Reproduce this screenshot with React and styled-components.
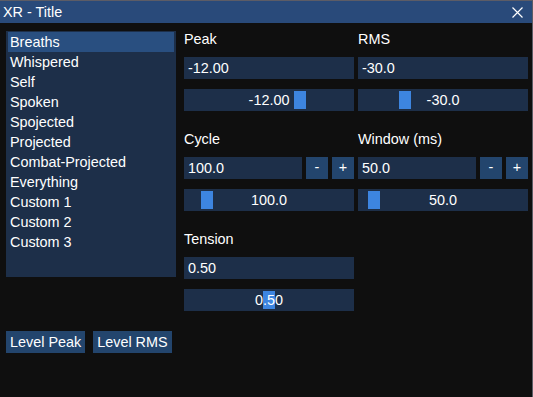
import React from "react";
import styled, { createGlobalStyle } from "styled-components";

const GlobalStyle = createGlobalStyle`
  html, body {
    margin: 0;
    padding: 0;
    background: #0f0f0f;
  }
  body {
    font-family: "Liberation Sans", Arial, sans-serif;
    font-size: 14.4px;
    color: #ffffff;
  }
`;

const Window = styled.div`
  width: 533px;
  height: 397px;
  box-sizing: border-box;
  background: #0f0f0f;
  border-top: 1px solid #5c5c66;
  border-right: 1px solid #5c5c66;
  overflow: hidden;
`;

const TitleBar = styled.div`
  height: 22px;
  background: #294a7a;
  display: flex;
  align-items: center;
  justify-content: space-between;
  padding: 0 9px 0 3px;
  line-height: 22px;
`;

const Body = styled.div`
  padding: 6px 0 0 6px;
`;

const Columns = styled.div`
  display: flex;
  align-items: flex-start;
`;

const ListBox = styled.div`
  width: 170px;
  height: 246px;
  margin-top: 2px;
  margin-right: 8px;
  box-sizing: border-box;
  background: #1d2f49;
  padding: 1px 2px;
`;

const Item = styled.div`
  height: 20px;
  line-height: 20px;
  padding-left: 2px;
  background: ${(p) => (p.$selected ? "#294f80" : "transparent")};
`;

const Controls = styled.div`
  display: grid;
  grid-template-columns: 170px 170px;
  column-gap: 4px;
  row-gap: 18px;
`;

const Group = styled.div`
  display: flex;
  flex-direction: column;
`;

const Label = styled.div`
  height: 20px;
  line-height: 20px;
  margin-bottom: 8px;
`;

const InputRow = styled.div`
  display: flex;
  gap: 4px;
  margin-bottom: 10px;
`;

const Input = styled.div`
  flex: 1;
  height: 22px;
  line-height: 22px;
  padding-left: 4px;
  background: #1d2f49;
`;

const StepButton = styled.div`
  width: 22px;
  height: 22px;
  line-height: 21px;
  text-align: center;
  background: #23456d;
`;

const Slider = styled.div`
  position: relative;
  height: 22px;
  line-height: 22px;
  background: #1d2f49;
  text-align: center;
`;

const Grab = styled.div`
  position: absolute;
  top: 2px;
  width: 12px;
  height: 18px;
  background: #3d85e0;
`;

const SliderText = styled.span`
  position: relative;
`;

const ButtonRow = styled.div`
  display: flex;
  gap: 8px;
  margin-top: 20px;
`;

const Button = styled.div`
  height: 22px;
  line-height: 22px;
  padding: 0 4px;
  background: #23456d;
`;

const items = [
  "Breaths",
  "Whispered",
  "Self",
  "Spoken",
  "Spojected",
  "Projected",
  "Combat-Projected",
  "Everything",
  "Custom 1",
  "Custom 2",
  "Custom 3",
];

const groups = [
  { label: "Peak", value: "-12.00", frac: 0.7 },
  { label: "RMS", value: "-30.0", frac: 0.25 },
  { label: "Cycle", value: "100.0", frac: 0.1, steps: true },
  { label: "Window (ms)", value: "50.0", frac: 0.05, steps: true },
  { label: "Tension", value: "0.50", frac: 0.5 },
];

function CloseIcon() {
  return (
    <svg width="11" height="11" viewBox="0 0 11 11">
      <path d="M0.5 0.5 L10.5 10.5 M10.5 0.5 L0.5 10.5" stroke="#fff" strokeWidth="1.2" />
    </svg>
  );
}

function Control({ label, value, frac, steps }) {
  return (
    <Group>
      <Label>{label}</Label>
      <InputRow>
        <Input>{value}</Input>
        {steps && <StepButton>-</StepButton>}
        {steps && <StepButton>+</StepButton>}
      </InputRow>
      <Slider>
        <Grab style={{ left: 2 + frac * 154 }} />
        <SliderText>{value}</SliderText>
      </Slider>
    </Group>
  );
}

export default function App() {
  return (
    <Window>
      <GlobalStyle />
      <TitleBar>
        <span>XR - Title</span>
        <CloseIcon />
      </TitleBar>
      <Body>
        <Columns>
          <ListBox>
            {items.map((it, i) => (
              <Item key={it} $selected={i === 0}>
                {it}
              </Item>
            ))}
          </ListBox>
          <Controls>
            {groups.map((g) => (
              <Control key={g.label} {...g} />
            ))}
          </Controls>
        </Columns>
        <ButtonRow>
          <Button>Level Peak</Button>
          <Button>Level RMS</Button>
        </ButtonRow>
      </Body>
    </Window>
  );
}
